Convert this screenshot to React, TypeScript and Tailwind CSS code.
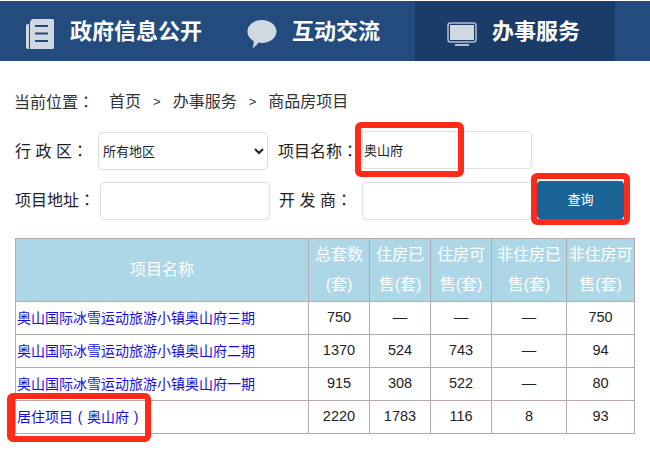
const font = "font-['Liberation_Sans','Noto_Sans_CJK_SC',sans-serif]";
const centered = "font-['Noto_Sans_CJK_TC',sans-serif]";

const rows = [
  ["奥山国际冰雪运动旅游小镇奥山府三期", "750", "—", "—", "—", "750"],
  ["奥山国际冰雪运动旅游小镇奥山府二期", "1370", "524", "743", "—", "94"],
  ["奥山国际冰雪运动旅游小镇奥山府一期", "915", "308", "522", "—", "80"],
  ["居住项目(奥山府)", "2220", "1783", "116", "8", "93"],
];

const headers = [
  { label: "总套数(套)", w: "w-[61px]" },
  { label: "住房已售(套)", w: "w-[61px]" },
  { label: "住房可售(套)", w: "w-[61px]" },
  { label: "非住房已售(套)", w: "w-[75px]" },
  { label: "非住房可售(套)", w: "w-[68px]" },
];

// the full-width colon sits in the middle of its box in the reference
function Colon() {
  return <span className={centered}>：</span>;
}

// same for the brackets, drawn as a full-width box round a narrow glyph
function ProjectName({ name }: { name: string }) {
  const parts = name.split(/([()])/);
  return (
    <>
      {parts.map((part, i) =>
        part === "(" || part === ")" ? (
          <span key={i} className="inline-block w-[14px] text-center">
            {part}
          </span>
        ) : (
          part
        ),
      )}
    </>
  );
}

function NavItem({ icon, label, active, width }: { icon: React.ReactNode; label: string; active?: boolean; width: string }) {
  return (
    <div className={`flex h-full items-center ${width} ${active ? "bg-[#1b3c68] pl-[30px]" : "pl-[23px]"}`}>
      <span className="mt-[5px] mr-[13px] flex w-[34px] justify-center">{icon}</span>
      <span className="text-[22px] font-bold whitespace-nowrap text-white">{label}</span>
    </div>
  );
}

export default function App() {
  return (
    <div className={`${font} relative h-[460px] w-[650px] overflow-hidden bg-white text-[#333]`}>
      <div className="mt-px flex h-[60px] bg-[#234b7e]">
        <NavItem
          width="w-[222px]"
          label="政府信息公开"
          icon={
            <svg width="28" height="30" viewBox="0 0 28 30" fill="none">
              <path d="M5 1.500a1.500 1.500 0 0 1 1.500-1.500h20a1.500 1.500 0 0 1 1.500 1.500v27a1.500 1.500 0 0 1-1.500 1.500H4V3z" fill="#d0d8e2" />
              <path d="M0 7a2 2 0 0 1 2-2h1v25H2a2 2 0 0 1-2-2z" fill="#d0d8e2" />
              <path d="M9 7h13M9 14.500h13M9 22h13" stroke="#234b7e" strokeWidth="2" />
            </svg>
          }
        />
        <NavItem
          width="w-[193px]"
          label="互动交流"
          icon={
            <svg width="30" height="28" viewBox="0 0 30 28">
              <path d="M15 0c7.800 0 14.500 5 14.500 11.500S22.800 23 15 23c-1.300 0-2.500-.1-3.700-.4C9.800 25.500 7.200 27.300 5.500 28c.7-1.500 1.200-3.500 1.300-6.800C3 19.100.5 15.500.5 11.500.5 5 7.200 0 15 0z" fill="#d0d8e2" />
            </svg>
          }
        />
        <NavItem
          active
          width="w-[200px]"
          label="办事服务"
          icon={
            <svg width="30" height="24" viewBox="0 0 30 24" fill="none">
              <rect x="1" y="1" width="28" height="19" rx="2.500" stroke="#b4c0d0" strokeWidth="1.500" />
              <rect x="3" y="3" width="24" height="15" fill="#d0d8e2" />
              <rect x="8" y="22" width="14" height="2" fill="#b4c0d0" />
            </svg>
          }
        />
      </div>

      <div className="mt-[31px] ml-[14px] flex h-[20px] items-center text-[16px] whitespace-nowrap">
        <span>
          当前位置
          <Colon />
        </span>
        <span className="ml-[15px]">首页</span>
        <span className="mx-[12px] text-[13px]">&gt;</span>
        <span>办事服务</span>
        <span className="mx-[12px] text-[13px]">&gt;</span>
        <span>商品房项目</span>
      </div>

      <div className="mt-[19px] ml-[15px] flex items-start text-[16px] leading-[38px] whitespace-nowrap text-[#222]">
        <span className="h-[38px] w-[83px]">
          行 政 区
          <Colon />
        </span>
        <select className="mt-px h-[38px] w-[170px] rounded border border-[#ddd] bg-white text-[13px] text-[#222]" defaultValue="所有地区">
          <option>所有地区</option>
        </select>
        <span className="ml-[10px] h-[38px] w-[84px]">
          项目名称
          <Colon />
        </span>
        <input className="h-[38px] w-[170px] rounded border border-[#ddd] px-px pt-[2px] text-[13px] text-[#222] outline-none" defaultValue="奥山府" />
      </div>

      <div className="mt-[12px] ml-[15px] flex items-start text-[16px] leading-[34px] whitespace-nowrap text-[#222]">
        <span className="h-[38px] w-[85px]">
          项目地址
          <Colon />
        </span>
        <input className="h-[38px] w-[170px] rounded border border-[#ddd] outline-none" />
        <span className="ml-[9px] h-[38px] w-[83px]">
          开 发 商
          <Colon />
        </span>
        <input className="h-[38px] w-[170px] rounded border border-[#ddd] outline-none" />
        <button className="-mt-[1px] ml-[5px] h-[38px] w-[87px] rounded-sm bg-[#1b6596] text-[13px] text-white">查询</button>
      </div>

      <table className="mt-[18px] ml-[15px] w-[620px] table-fixed border-collapse border border-[#b5a9ae]">
        <thead>
          <tr className="h-[63px] bg-[#add7e6] text-[16px] text-white">
            <th className="w-[293px] border border-[#b5a9ae] font-normal">项目名称</th>
            {headers.map((h) => (
              <th key={h.label} className={`${h.w} border border-[#b5a9ae] px-0 leading-[30px] font-normal`}>
                {h.label}
              </th>
            ))}
          </tr>
        </thead>
        <tbody>
          {rows.map((row) => (
            <tr key={row[0]} className="h-[33px]">
              {row.map((cell, i) =>
                i === 0 ? (
                  <td key={i} className="border border-[#b5a9ae] pl-px text-[14px] whitespace-nowrap text-[#1a0de0]">
                    <ProjectName name={cell} />
                  </td>
                ) : (
                  <td key={i} className="border border-[#b5a9ae] text-center text-[14.5px] text-[#222]">
                    {cell}
                  </td>
                ),
              )}
            </tr>
          ))}
        </tbody>
      </table>

      {/* red annotation boxes drawn over the page */}
      <div className="absolute top-[122px] left-[355px] h-[55px] w-[109px] rounded-md border-[6px] border-[#ff2a1a]" />
      <div className="absolute top-[173px] left-[531px] h-[52px] w-[99px] rounded-md border-[6px] border-[#ff2a1a]" />
      <div className="absolute top-[393px] left-[7px] h-[49px] w-[144px] rounded-md border-[6px] border-l-[8px] border-[#ff2a1a]" />
    </div>
  );
}
